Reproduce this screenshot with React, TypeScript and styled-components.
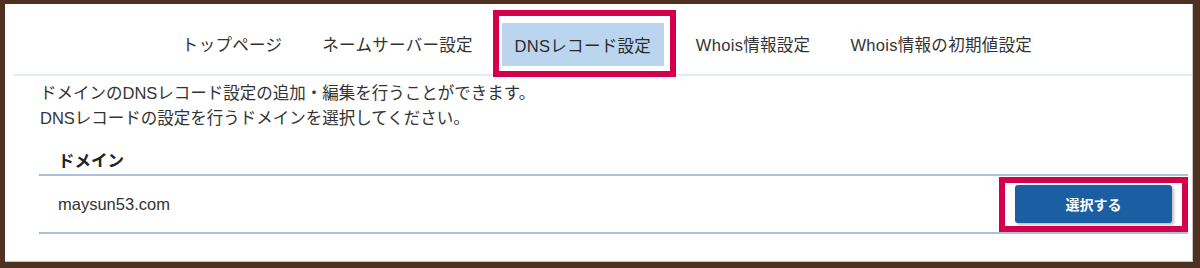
import React from "react";
import styled, { createGlobalStyle } from "styled-components";

const Global = createGlobalStyle`
  html, body { margin: 0; padding: 0; background: #4e3121; }
  body { font-family: "Liberation Sans", "Noto Sans CJK JP", sans-serif; color: #333; }
  * { box-sizing: border-box; }
`;

const Frame = styled.div`
  width: 1200px;
  height: 268px;
  background: #4e3121;
  padding: 4px 7px 6px 5px;
`;

const Sheet = styled.div`
  height: 100%;
  background: #fff;
  border-right: 1px solid #c9c4c0;
  border-bottom: 1px solid #c9c4c0;
  display: flex;
  flex-direction: column;
`;

const NavBar = styled.nav`
  height: 72px;
  margin-left: 9px;
  border-bottom: 2px solid #e4ebf5;
  display: flex;
  align-items: center;
  justify-content: center;
  padding: 9px 0 0 8px;
`;

const NavItem = styled.a`
  font-size: 16.5px;
  letter-spacing: 0.3px;
  color: #333;
  text-decoration: none;
  padding: 0 20px;
  white-space: nowrap;
`;

const Mark = styled.div<{ $pad: string }>`
  border: 6px solid #d4004c;
  padding: ${(p) => p.$pad};
  display: flex;
  flex-shrink: 0;
`;

const ActiveTab = styled.a`
  font-size: 16.5px;
  letter-spacing: 0.3px;
  color: #2b2b2b;
  background: #bcd5ef;
  height: 43px;
  width: 162px;
  display: flex;
  align-items: center;
  justify-content: center;
  text-decoration: none;
  white-space: nowrap;
`;

const Body = styled.div`
  padding: 5px 4px 0 34px;
`;

const Lead = styled.p`
  margin: 0 0 0 1px;
  font-size: 16.5px;
  line-height: 25px;
  color: #333;
`;

const Table = styled.div`
  margin-top: 18px;
`;

const HeadRow = styled.div`
  border-bottom: 2px solid #a9c1dd;
  padding: 0 0 1px 19px;
  font-size: 16.5px;
  font-weight: bold;
  color: #222;
  line-height: 24px;
`;

const Row = styled.div`
  height: 58px;
  border-bottom: 2px solid #a9c1dd;
  display: flex;
  align-items: center;
  justify-content: space-between;
  padding-left: 19px;
`;

const DomainName = styled.span`
  font-size: 16.5px;
  color: #333;
`;

const SelectButton = styled.button`
  width: 157px;
  height: 38px;
  background: #1b5ea2;
  color: #fff;
  border: none;
  border-radius: 3px;
  font-family: "Liberation Sans", "Noto Sans CJK JP", sans-serif;
  font-weight: bold;
  font-size: 14px;
  box-shadow: 2px 2px 3px rgba(0, 0, 0, 0.25);
`;

export default function App() {
  return (
    <>
      <Global />
      <Frame>
        <Sheet>
          <NavBar>
            <NavItem>トップページ</NavItem>
            <NavItem>ネームサーバー設定</NavItem>
            <Mark $pad="7px 6px 5px 3px">
              <ActiveTab>DNSレコード設定</ActiveTab>
            </Mark>
            <NavItem>Whois情報設定</NavItem>
            <NavItem>Whois情報の初期値設定</NavItem>
          </NavBar>
          <Body>
            <Lead>
              ドメインのDNSレコード設定の追加・編集を行うことができます。
              <br />
              DNSレコードの設定を行うドメインを選択してください。
            </Lead>
            <Table>
              <HeadRow>ドメイン</HeadRow>
              <Row>
                <DomainName>maysun53.com</DomainName>
                <Mark $pad="2px 10px 3px 10px">
                  <SelectButton>選択する</SelectButton>
                </Mark>
              </Row>
            </Table>
          </Body>
        </Sheet>
      </Frame>
    </>
  );
}
